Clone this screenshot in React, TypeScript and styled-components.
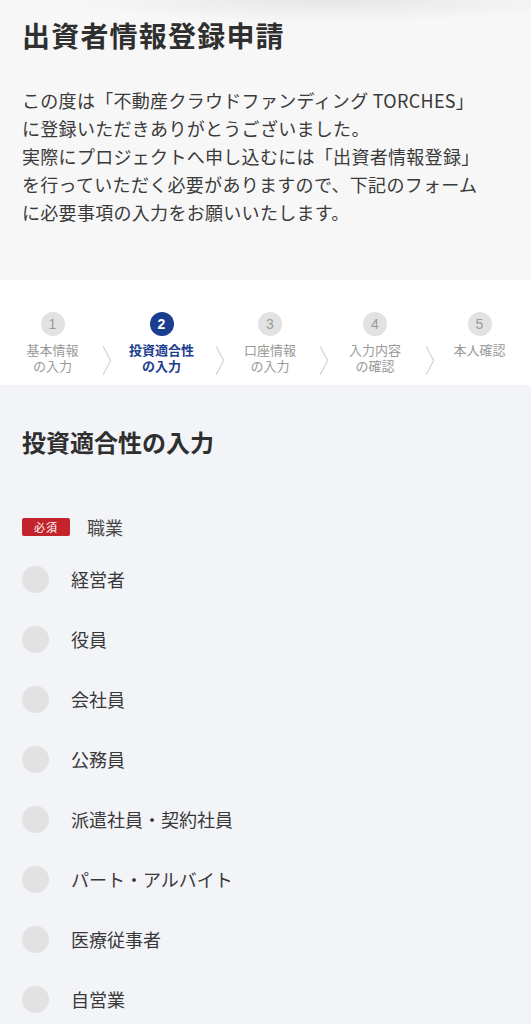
import React from "react";
import styled, { createGlobalStyle } from "styled-components";

const GlobalStyle = createGlobalStyle`
  * { box-sizing: border-box; }
  body {
    margin: 0;
    background: #f3f4f8;
    font-family: "Noto Sans CJK JP", "Noto Sans", sans-serif;
    color: #333;
  }
`;

const Intro = styled.section`
  background: radial-gradient(ellipse 260px 22px at 62% 0, #e6e6e6, rgba(247, 247, 247, 0)) #f7f7f7;
  padding: 14px 22px 54px;
`;

const Title = styled.h1`
  margin: 0;
  font-size: 28px;
  line-height: 42px;
  font-weight: 700;
  letter-spacing: 1.2px;
  color: #2f2f2f;
`;

const Lead = styled.p`
  margin: 30px 0 0;
  font-size: 18px;
  line-height: 28px;
  letter-spacing: 0.3px;
  color: #3a3a3a;
  white-space: pre-line;
`;

const Steps = styled.ol`
  list-style: none;
  margin: 0;
  padding: 32px 0 11px;
  background: #fff;
  display: grid;
  grid-template-columns: 105px 113px 104px 106px 103px;
`;

const Step = styled.li`
  position: relative;
  display: flex;
  flex-direction: column;
  align-items: center;
  &:not(:last-child)::after {
    content: "";
    position: absolute;
    right: -4px;
    top: 43px;
    width: 10px;
    height: 10px;
    border-top: 1px solid #d4d4d4;
    border-right: 1px solid #d4d4d4;
    transform: scaleY(1.9) rotate(45deg);
  }
`;

const StepNum = styled.span<{ $active?: boolean }>`
  width: 24px;
  height: 24px;
  border-radius: 50%;
  display: flex;
  align-items: center;
  justify-content: center;
  font-family: "Liberation Sans", sans-serif;
  font-size: 14px;
  font-weight: ${(p) => (p.$active ? 700 : 400)};
  background: ${(p) => (p.$active ? "#1b3d8f" : "#e2e2e2")};
  color: ${(p) => (p.$active ? "#fff" : "#9a9a9a")};
`;

const StepLabel = styled.span<{ $active?: boolean }>`
  margin-top: 6px;
  font-size: 13px;
  line-height: 16px;
  text-align: center;
  white-space: pre-line;
  font-weight: ${(p) => (p.$active ? 700 : 400)};
  color: ${(p) => (p.$active ? "#1b3d8f" : "#999")};
`;

const Form = styled.section`
  padding: 40px 22px 40px;
`;

const SectionTitle = styled.h2`
  margin: 0;
  font-size: 24px;
  line-height: 34px;
  font-weight: 700;
  color: #2f2f2f;
`;

const FieldHead = styled.div`
  margin-top: 55px;
  display: flex;
  align-items: center;
  gap: 17px;
`;

const Required = styled.span`
  width: 48px;
  height: 18px;
  border-radius: 2px;
  background: #c3242c;
  color: #fff;
  font-size: 11px;
  line-height: 18px;
  text-align: center;
  letter-spacing: 1px;
`;

const FieldName = styled.span`
  font-size: 18px;
  color: #4a4a4a;
`;

const Options = styled.ul`
  list-style: none;
  margin: 25px 0 0;
  padding: 0;
  display: flex;
  flex-direction: column;
  gap: 32px;
`;

const Option = styled.li`
  display: flex;
  align-items: center;
  gap: 22px;
  height: 28px;
`;

const Radio = styled.span`
  width: 27px;
  height: 27px;
  border-radius: 50%;
  background: #e2e2e2;
  flex-shrink: 0;
`;

const OptionLabel = styled.span`
  font-size: 18px;
  color: #383838;
`;

const steps = [
  "基本情報\nの入力",
  "投資適合性\nの入力",
  "口座情報\nの入力",
  "入力内容\nの確認",
  "本人確認",
];

const jobs = [
  "経営者",
  "役員",
  "会社員",
  "公務員",
  "派遣社員・契約社員",
  "パート・アルバイト",
  "医療従事者",
  "自営業",
];

const App: React.FC = () => {
  const current = 1;

  return (
    <>
      <GlobalStyle />
      <Intro>
        <Title>出資者情報登録申請</Title>
        <Lead>
          {"この度は「不動産クラウドファンディング TORCHES」\nに登録いただきありがとうございました。\n実際にプロジェクトへ申し込むには「出資者情報登録」\nを行っていただく必要がありますので、下記のフォーム\nに必要事項の入力をお願いいたします。"}
        </Lead>
      </Intro>
      <Steps>
        {steps.map((label, i) => (
          <Step key={label}>
            <StepNum $active={i === current}>{i + 1}</StepNum>
            <StepLabel $active={i === current}>{label}</StepLabel>
          </Step>
        ))}
      </Steps>
      <Form>
        <SectionTitle>投資適合性の入力</SectionTitle>
        <FieldHead>
          <Required>必須</Required>
          <FieldName>職業</FieldName>
        </FieldHead>
        <Options>
          {jobs.map((job) => (
            <Option key={job}>
              <Radio />
              <OptionLabel>{job}</OptionLabel>
            </Option>
          ))}
        </Options>
      </Form>
    </>
  );
};

export default App;
